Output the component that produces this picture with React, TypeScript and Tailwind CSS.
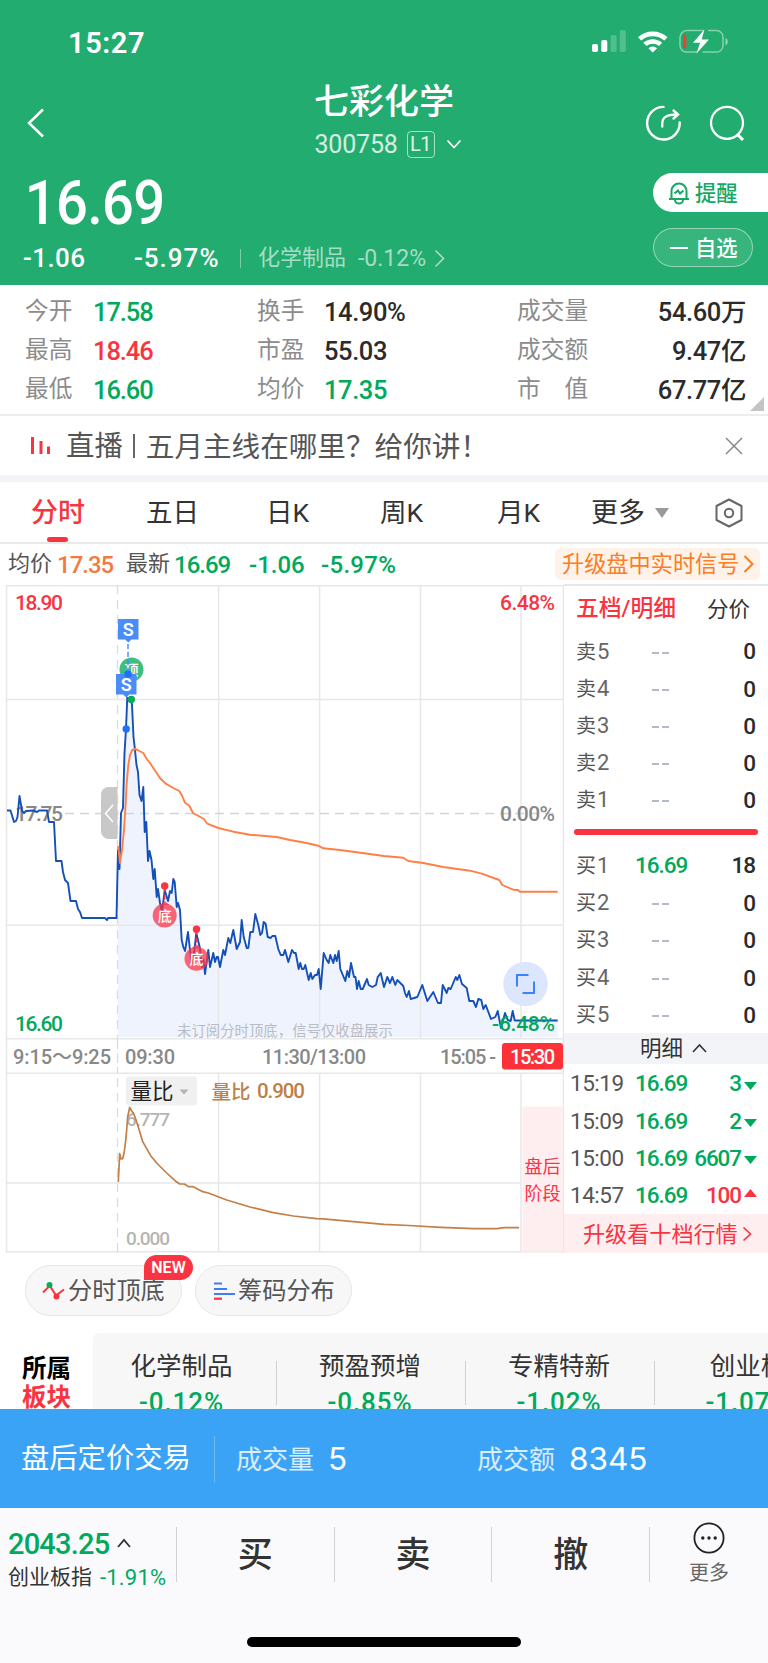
import React from "react";

const OPENING_LINE =
	"7,810.5 10.5,810.5 14,822 16,821 17.5,817 19.5,796 22,811 24,813 26,811 33,810.5 37,812 39,810.5 47,810.5 49,822 54,822 56,861 61.5,861 63,872 65,880 68,883 70.5,901 76,901 78,909 80,912 82,918 105,918 107,920 108,918 116.5,918";

const RISE_LINE = "118,850 118.5,862 119.5,869 121,813 123,808 124.5,753 126,729 127.3,697";

const DAY_LINE =
	"131,697 132,705 133.5,737 135,750 136.5,765 138,772 139.5,795 141.5,801 143.3,787 144.7,832 146.3,822 148,861 149.5,851 151.5,860 153.3,879 154.7,869 156.7,897 158,889 160,903 162,912 164.7,890 168,901 170,891 171.7,893 173.3,879 174.7,882 176.7,907 178,903 180,910 181.7,940 183.3,947 185,951 188,932 190,950 191.7,963 194,953 196.3,933 199.7,947 202,967 203.5,960 205,974 208.3,950 210,967 213.3,953 215,962 216.7,957 218,957 220,967 223.3,950 225,955 228.3,938 230.3,943 233.3,930 236.7,949 240,942 241.7,920 243.7,937 246.7,948 248.3,948 250.3,932 253,932 255.3,914 258.3,925 260.3,935 262,933 263.7,922 265.7,924 267.7,937 270.7,938 272.3,936 275.3,936 278.3,949 280.7,955 283.3,955 285,950 288.3,962 292,950 294,953 295.7,953 298.7,969 300.3,963 302,969 303.7,969 305.3,965 308.7,980 310.7,973 312.3,979 315,975 317,975 318.7,969 320.7,989 323.7,953 326.7,960 328.7,963 330.3,955 333.3,963 335,955 336.7,961 338.7,951 340.3,969 345.3,981 347.3,971 349,977 351,963 354,977 355.5,977 357,989 358.7,981 360.7,989 362.7,989 367,979 368.7,985 372.3,987 376,985 377.7,977 380.7,973 384,987 387.3,977 390,983 392.3,977 395.3,985 397.3,980 403.3,986 405,993 406.7,997 409,991 410.7,999 414,998 417.3,997 422.3,985 427.3,1001 433.3,992 438,1003 441,1003 442.7,985 446.7,993 448.3,988 450.7,989 455.7,977 457.3,980 459.3,975 462,984 466.7,988 469.3,1001 473.3,1001 476,1007 478.3,999 481.3,1000 483.3,1009 485.7,1005 491,1019 495.3,1017 497.7,1011 501,1028 505,1013 507.7,1020 510.7,1021 512.7,1011 514.7,1020.5 557.7,1020.5";

const AVERAGE_LINE =
	"118.3,846 120,863 122,850 124,830 125.7,803 126.7,783 128.3,765 130,755 132.3,750 135,749 137.5,750 143.3,753 146.7,759 150,763 153.3,768 160,778 165.7,783.7 173.3,788 179.3,791 181.7,795 185,802.7 189.3,805.7 193,813 196.7,815 204,819 207.3,823.7 218.3,828 233.3,831.7 250,834.7 276.7,837 290,840 306.7,843 318.3,845.7 323.3,848.3 340,850 356.7,852.3 384,856 403.3,857.7 408.3,861 423.3,863 443.3,867 470,870.7 481.7,873.7 499.3,880 502.3,885 513.3,889.7 518,890 520,891.7 557.7,891.7";

const RATIO_LINE =
	"118.3,1182 119.7,1153.7 121,1159 122.7,1158.7 124.3,1151.7 126,1138 127.7,1116.7 129.7,1107.3 131.7,1111 133.3,1113 135,1117 138.3,1127 142.7,1141.7 150.7,1155.7 156.7,1163 166.7,1173 175,1180.7 179.7,1184 184.3,1184 188.7,1186.7 193.3,1186.7 202.7,1191.7 208.3,1193 226.7,1200 250,1207 273.3,1212.7 293.3,1216 316.7,1218.7 323,1218.9 353.3,1221.7 384,1224.3 409,1225.5 440.7,1227.3 474,1228.7 497.3,1228.7 504,1227.7 519,1227.7";

const STATS = [
	["今开", "17.58", "text-[#00a95c]", "换手", "14.90%", "text-[#2b2b2b]", "成交量", "54.60万"],
	["最高", "18.46", "text-[#f93440]", "市盈", "55.03", "text-[#2b2b2b]", "成交额", "9.47亿"],
	["最低", "16.60", "text-[#00a95c]", "均价", "17.35", "text-[#00a95c]", "市　值", "67.77亿"],
];

const SELLS = ["5", "4", "3", "2", "1"];
const BUYS = [
	["1", "16.69", "18"],
	["2", "", "0"],
	["3", "", "0"],
	["4", "", "0"],
	["5", "", "0"],
];

const TRADES = [
	["15:19", "3", "down"],
	["15:09", "2", "down"],
	["15:00", "6607", "down"],
	["14:57", "100", "up"],
];

const SECTORS = [
	["化学制品", "-0.12%"],
	["预盈预增", "-0.85%"],
	["专精特新", "-1.02%"],
	["创业板", "-1.07%"],
];

type ChevronProps = { w: number; h: number; d: string; sw?: number; className?: string };

const Chevron: React.FC<ChevronProps> = ({ w, h, d, sw = 2, className }) => (
	<svg width={w} height={h} viewBox={`0 0 ${w} ${h}`} fill="none" stroke="currentColor" strokeWidth={sw} className={`shrink-0 ${className ?? ""}`}>
		<path d={d} />
	</svg>
);

const StatusBar: React.FC = () => (
	<div className="flex h-[84px] items-center justify-between pl-[68px] pr-[38px]">
		<span className="pt-[2px] text-[29px] font-semibold leading-none tracking-[0.6px]">15:27</span>
		<svg width="138" height="26" viewBox="0 0 138 26" fill="none">
			<rect x="0" y="15" width="6" height="8" rx="1.8" fill="#fff" />
			<rect x="9.3" y="11" width="6" height="12" rx="1.8" fill="#fff" />
			<rect x="18.6" y="6" width="6" height="17" rx="1.8" fill="#fff" opacity=".22" />
			<rect x="27.8" y="1" width="6" height="22" rx="1.8" fill="#fff" opacity=".22" />
			<path d="M46 8.2a22 22 0 0 1 29.5 0l-3.2 3.4a17.4 17.4 0 0 0-23.1 0zM51.3 13.8a14.4 14.4 0 0 1 18.9 0l-3.2 3.3a9.8 9.8 0 0 0-12.5 0zM56.4 19.2a6.6 6.6 0 0 1 8.7 0l-4.4 4.3z" fill="#fff" />
			<path d="M112 1.6H94.5a7 7 0 0 0-6.5 6.5v8.5a6.5 6.5 0 0 0 6.5 6.5H106M116 1.6h8.5a6.5 6.5 0 0 1 6.5 6.5v8.5a6.5 6.5 0 0 1-6.5 6.5H110.5" stroke="#fff" strokeOpacity=".45" strokeWidth="1.5" />
			<path d="M133.5 9c3 1.5 3 6 0 7.5z" fill="#fff" opacity=".5" />
			<rect x="91" y="5.5" width="3.3" height="14" rx="1.5" fill="#fb3b2f" />
			<path d="M112.5 0.5 101 13.7h7l-3.5 10.8L117 10.6h-7.4z" fill="#fff" />
		</svg>
	</div>
);

const Header: React.FC = () => (
	<header className="h-[285px] bg-[#22ac6f] text-white">
		<StatusBar />
		<div className="flex h-[84px] items-start justify-between pl-[27px] pr-[22px]">
			<Chevron w={18} h={30} d="M16 1.5 2 15l14 13.5" sw={2.5} className="mt-6" />
			<div className="ml-[80px] flex flex-col items-center">
				<h1 className="mt-[2px] text-[35px] font-medium leading-[33px]">七彩化学</h1>
				<div className="mt-[11px] flex h-[28px] w-[145px] items-center pl-[3px]">
					<span className="w-[92px] shrink-0 text-[25px] leading-none tracking-[-0.2px] text-white/80">300758</span>
					<span className="flex h-[27px] w-[28px] shrink-0 items-center justify-center rounded border border-white/60 text-xl leading-none tracking-[-0.5px] text-white/85">L1</span>
					<Chevron w={16} h={11} d="M1.5 1.5 8 8.5l6.5-7" sw={1.8} className="ml-[11px]" />
				</div>
			</div>
			<div className="mt-5 flex gap-[25px]">
				<svg width="40" height="40" viewBox="0 0 40 40" fill="none" stroke="#fff" strokeWidth="2.4" strokeLinecap="round">
					<path d="M20.5 2.9A16.3 16.3 0 1 0 36.7 18.5" />
					<path d="M19.2 22.5v-2.5c0-6.5 4-9.5 14-9.5M30.5 6.5l4.5 4-4.5 4" />
				</svg>
				<svg width="38" height="40" viewBox="0 0 38 40" fill="none" stroke="#fff" strokeWidth="2.3">
					<circle cx="19" cy="18.8" r="16" />
					<path d="m29 30 6 6" strokeWidth="3" />
				</svg>
			</div>
		</div>
		<div className="flex justify-between">
			<div>
				<div className="flex h-[70px] origin-left scale-x-[0.92] items-center pl-[27px] pt-px text-[61px] font-medium leading-none tracking-[-0.8px]">16.69</div>
				<div className="flex h-[38px] items-center pl-[23px] pt-[2px] text-[26px] leading-none">
					<span className="w-[111px] font-medium tracking-[0.4px]">-1.06</span>
					<span className="w-[106px] font-medium tracking-[1px]">-5.97%</span>
					<span className="mr-[17px] h-[19px] w-px bg-white/40" />
					<span className="w-[100px] text-[22px] text-white/60">化学制品</span>
					<span className="w-[76px] text-[23px] text-white/60">-0.12%</span>
					<Chevron w={11} h={19} d="M1.5 1.5l8 8-8 8" sw={1.6} className="text-white/60" />
				</div>
			</div>
			<div className="flex w-[115px] flex-col pt-[5px] text-[21.3px] font-medium leading-none">
				<div className="flex h-[39px] items-center rounded-l-full bg-white pl-[15px] text-[#13a863]">
					<svg width="22" height="24" viewBox="0 0 22 24" fill="none" stroke="currentColor" strokeWidth="2">
						<path d="M1 18h20M3.5 18V10a7.5 7.5 0 0 1 15 0v8M7 19a4 3.5 0 0 0 8 0" />
						<path d="M6.5 12.5 10 9.5l2 3 3.5-3" />
					</svg>
					<span className="ml-[5px] pt-[2px]">提醒</span>
				</div>
				<div className="mt-4 flex h-[39px] w-[100px] items-center rounded-full border border-white/45 bg-white/10 pl-4">
					<span className="h-[2px] w-[18px] bg-white" />
					<span className="ml-[7px] pt-[2px]">自选</span>
				</div>
			</div>
		</div>
	</header>
);

const Stats: React.FC = () => (
	<section className="relative h-[131px] border-b-2 border-[#ededed] pt-[7px]">
		{STATS.map(([a, av, ac, b, bv, bc, c, cv]) => (
			<div key={a} className="flex h-[39px] items-center pl-[25px] pr-[22px] text-[25.5px] font-medium leading-none tracking-[-0.8px]">
				<span className="w-[68px] text-[23.7px] font-normal tracking-normal text-[#8c8c8c]">{a}</span>
				<span className={`w-[164px] pt-[2px] tracking-[-1.1px] ${ac}`}>{av}</span>
				<span className="w-[67px] text-[23.7px] font-normal tracking-normal text-[#8c8c8c]">{b}</span>
				<span className={`w-[193px] pt-[2px] tracking-[-0.4px] ${bc}`}>{bv}</span>
				<span className="text-[23.7px] font-normal tracking-normal text-[#8c8c8c]">{c}</span>
				<span className="ml-auto pt-[2px] tracking-[-0.4px] text-[#2b2b2b]">{cv}</span>
			</div>
		))}
		<svg className="absolute right-1 top-[112px]" width="14" height="14" viewBox="0 0 14 14">
			<path d="M14 0v14H0z" fill="#c4c4c4" />
		</svg>
	</section>
);

const LiveBanner: React.FC = () => (
	<section className="flex h-[66px] items-center border-b-[7px] border-[#f3f4f8] pl-[31px] pr-[25px]">
		<svg width="20" height="19" viewBox="0 0 20 19" stroke="#f93440" strokeWidth="3">
			<path d="M1.5 1v17M10 5v13M17.5 10.5V18" />
		</svg>
		<span className="ml-[15px] pt-[3px] text-[28.4px] leading-none text-[#555]">直播</span>
		<span className="ml-[10px] mr-[11px] h-[24px] w-[2px] bg-[#666]" />
		<span className="pt-[3px] text-[28.6px] leading-none text-[#555]">五月主线在哪里？给你讲！</span>
		<Chevron w={18} h={18} d="M1 1l16 16M17 1 1 17" sw={1.5} className="ml-auto text-[#888]" />
	</section>
);

const Tabs: React.FC = () => (
	<nav className="relative flex h-[62px] items-center border-b-2 border-[#e9e9e9] pl-[31px] pt-[2px] text-[27px] leading-none text-[#333]">
		<span className="w-[115px] font-medium text-[#f93440]">分时</span>
		<span className="w-[120px] text-[26.5px]">五日</span>
		<span className="w-[114px] text-[26.5px]">日K</span>
		<span className="w-[117px] text-[26.5px]">周K</span>
		<span className="w-[94px] text-[26.5px]">月K</span>
		<span>更多</span>
		<svg className="ml-[10px]" width="14" height="11" viewBox="0 0 14 11">
			<path d="M0 0h14L7 10z" fill="#999" />
		</svg>
		<svg className="ml-[46px]" width="28" height="30" viewBox="0 0 28 30" fill="none" stroke="#666" strokeWidth="2">
			<path d="M14 1.5 26.5 8v14L14 28.5 1.5 22V8z" strokeLinejoin="round" />
			<circle cx="14" cy="15" r="4.2" />
		</svg>
		<span className="absolute bottom-0 left-[47px] h-[5px] w-[21px] rounded-full bg-[#f93440]" />
	</nav>
);

const InfoRow: React.FC = () => (
	<div className="flex h-[40px] items-center pl-2 pr-2 text-[24px] font-medium leading-none tracking-[-1px] text-[#00a95c]">
		<span className="w-[49px] text-[22px] font-normal tracking-normal text-[#555]">均价</span>
		<span className="w-[69px] pt-[2px] text-[#f37b3f]">17.35</span>
		<span className="w-[48px] text-[22px] font-normal tracking-normal text-[#555]">最新</span>
		<span className="w-[75px] pt-[2px]">16.69</span>
		<span className="w-[72px] pt-[2px] tracking-normal">-1.06</span>
		<span className="pt-[2px] tracking-[0.3px]">-5.97%</span>
		<span className="ml-auto flex h-8 w-[205px] items-center rounded-md bg-[#fff2e8] pl-[7px] text-[22.2px] font-normal tracking-normal text-[#fb7d24]">
			升级盘中实时信号
			<Chevron w={11} h={20} d="M1.5 2l8 8-8 8" className="ml-[3px]" />
		</span>
	</div>
);

type MarkProps = { x: number; y: number; label: string; color: string };

const Flag: React.FC<{ x: number; y: number }> = ({ x, y }) => (
	<g>
		<path d={`M${x} ${y}h20.5v20.5h-7l-3.2 3-3.2-3h-7.1z`} fill="#4a8cfb" />
		<text x={x + 10.2} y={y + 16.8} textAnchor="middle" fontSize="18" fontWeight="600" fill="#fff">S</text>
	</g>
);

const BottomMark: React.FC<MarkProps> = ({ x, y, label, color }) => (
	<g>
		<path d={`M${x} ${y - 29}v14`} stroke={color} strokeWidth="1.5" strokeDasharray="5 3" />
		<circle cx={x} cy={y - 29.5} r="3.7" fill={color} />
		<path d={`M${x - 5} ${y - 10.5}l5-4 5 4z`} fill={color} opacity=".75" />
		<circle cx={x} cy={y} r="12" fill={color} opacity=".75" />
		<text x={x} y={y + 5.2} textAnchor="middle" fontSize="14" fontWeight="500" fill="#fff">{label}</text>
	</g>
);

const Chart: React.FC = () => (
	<svg width="564" height="669" viewBox="0 584 564 669" fill="none" className="shrink-0 font-[Roboto,'Noto_Sans_CJK_SC',sans-serif]">
		<path d={`M118,1037 L${RISE_LINE} ${DAY_LINE} L557.7,1037 z`} fill="#eff3fe" />
		<g stroke="#e7e7e7" strokeWidth="1.5">
			<path d="M6 585.7h558M6 699.5h558M6 925.3h558M6 1038.8h558M6 1073.3h558M6 1183h515M6 1251.8h558" />
			<path d="M6.5 585v667M218.6 585v454M319.6 585v454M420.5 585v454M521 585v454M563.5 585v667" />
			<path d="M218.6 1073v179M319.6 1073v179M420.5 1073v179M521 1073v179" />
		</g>
		<path d="M117.5 585v454M117.5 1078v174" stroke="#dcdcdc" strokeWidth="1.3" strokeDasharray="9 6" />
		<path d="M117.5 1039v34" stroke="#dcdcdc" strokeWidth="1.3" strokeDasharray="10 4" />
		<path d="M65 813.5h495" stroke="#c9d8e2" strokeWidth="1.3" strokeDasharray="9 6" />

		<path d="M117.5 787h-9a7.5 7.5 0 0 0-7.5 7.5v37a7.5 7.5 0 0 0 7.5 7.5h9z" fill="#c8c8c8" />
		<path d="M113 805l-7.5 8.5 7.5 8.5" stroke="#fff" strokeWidth="1.5" />

		<g fontSize="21" fontWeight="500">
			<text x="15" y="609.5" fill="#f93440" textLength="48">18.90</text>
			<text x="555" y="609.5" fill="#f93440" textAnchor="end" textLength="55">6.48%</text>
			<text x="15" y="820.5" fill="#888" textLength="48">17.75</text>
			<text x="555" y="820.5" fill="#888" textAnchor="end" textLength="55">0.00%</text>
			<text x="15" y="1030.5" fill="#00a95c" textLength="48">16.60</text>
		</g>
		<text x="177" y="1035.5" fontSize="14.4" fill="#b9bcc4">未订阅分时顶底，信号仅收盘展示</text>

		<circle cx="131.5" cy="669.5" r="12" fill="#42bd82" />
		<text x="131.5" y="675" textAnchor="middle" fontSize="14" fontWeight="500" fill="#fff">顶</text>
		<path d="M128 644v28" stroke="#4a8cfb" strokeWidth="1.5" strokeDasharray="5 3" />
		<Flag x={118} y={619} />
		<Flag x={116} y={674} />
		<g stroke="#1450b8" strokeWidth="1.9" strokeLinejoin="round">
			<polyline points={`${OPENING_LINE} ${RISE_LINE}`} />
			<polyline points={DAY_LINE} />
		</g>
		<polyline points={AVERAGE_LINE} stroke="#ff7f45" strokeWidth="1.9" strokeLinejoin="round" />
		<circle cx="128" cy="674" r="3.7" fill="#2171f5" />
		<circle cx="131.3" cy="699.5" r="3.7" fill="#00a95c" />
		<circle cx="126.2" cy="729" r="3.7" fill="#2171f5" />
		<BottomMark x={164.7} y={915.5} label="底" color="#f93448" />
		<BottomMark x={196.5} y={958.7} label="底" color="#f93448" />

		<circle cx="525.5" cy="984" r="22.3" fill="#dce7fd" />
		<path d="M517 986.5V975h11.5M534 981.5V993h-11.5" stroke="#3c82f8" strokeWidth="2" />
		<text x="555" y="1030.5" fontSize="21" fontWeight="500" fill="#00a95c" textAnchor="end" textLength="63">-6.48%</text>

		<g fontSize="20" fontWeight="500" fill="#888">
			<text x="13" y="1064" textLength="98">9:15～9:25</text>
			<text x="125" y="1064" textLength="50">09:30</text>
			<text x="262" y="1064" textLength="104">11:30/13:00</text>
			<text x="440" y="1064" textLength="56">15:05 -</text>
		</g>
		<rect x="502" y="1043" width="61" height="26.5" rx="3" fill="#fd3138" />
		<text x="532.5" y="1064" fontSize="20" fontWeight="500" fill="#fff" textAnchor="middle" textLength="45">15:30</text>

		<rect x="522.5" y="1106.5" width="40.5" height="145" fill="#ffeef0" />
		<text x="524.5" y="1173" fontSize="18" fill="#f93448">盘后</text>
		<text x="524.5" y="1199.5" fontSize="18" fill="#f93448">阶段</text>
		<rect x="126" y="1076.5" width="71" height="29" rx="3" fill="#f0f0f0" />
		<text x="130.5" y="1098.5" fontSize="21.5" fill="#222">量比</text>
		<path d="M179.5 1089.5h9l-4.5 5z" fill="#b5b5b5" />
		<text x="211.5" y="1098.5" fontSize="19.5" fill="#be8046" fontWeight="500">量比</text>
		<text x="257" y="1098" fontSize="20.5" fill="#be8046" fontWeight="500" textLength="48">0.900</text>
		<text x="126" y="1126" fontSize="19" fontWeight="500" fill="#b5b5b5" textLength="44">6.777</text>
		<text x="126" y="1245" fontSize="19" fontWeight="500" fill="#b5b5b5" textLength="44">0.000</text>
		<polyline points={RATIO_LINE} stroke="#c27f48" strokeWidth="1.7" strokeLinejoin="round" />
	</svg>
);

type QuoteProps = { side: string; level: string; price?: string; volume: string };

const QuoteRow: React.FC<QuoteProps> = ({ side, level, price, volume }) => (
	<div className="flex h-[37.4px] items-center pl-[12px] pr-[13px] leading-none">
		<span className="w-[21px] text-[20px] text-[#555]">{side}</span>
		<span className="w-[12px] text-[22px] text-[#666]">{level}</span>
		{price ? (
			<span className="ml-[26px] text-[22.5px] font-medium tracking-[-1px] text-[#00a95c]">{price}</span>
		) : (
			<span className="ml-[43px] flex gap-[3px] pt-[2px]">
				<i className="h-[2px] w-[7px] bg-[#b3bcc6]" />
				<i className="h-[2px] w-[7px] bg-[#b3bcc6]" />
			</span>
		)}
		<span className="ml-auto text-[22.5px] font-medium tracking-[-1px] text-[#2b2b2b]">{volume}</span>
	</div>
);

const OrderBook: React.FC = () => (
	<aside className="flex h-[669px] w-[204px] flex-col border-t-2 border-[#e7e7e7]">
		<div className="flex h-[47px] shrink-0 items-center justify-between pl-[12px] pr-[18px] leading-none">
			<span className="text-[22.8px] font-medium text-[#f93440]">五档/明细</span>
			<span className="text-[21.5px] text-[#333]">分价</span>
		</div>
		{SELLS.map((n) => <QuoteRow key={n} side="卖" level={n} volume="0" />)}
		<div className="ml-[10px] mr-[10px] mt-[10px] h-[6px] shrink-0 rounded-full bg-[#f93440]" />
		<div className="mt-[12px]">
			{BUYS.map(([n, p, v]) => <QuoteRow key={n} side="买" level={n} price={p} volume={v} />)}
		</div>
		<div className="-mt-px flex h-[31px] shrink-0 items-center justify-center gap-[9px] bg-[#f3f4f8] pl-[15px] text-[21.5px] leading-none text-[#333]">
			明细
			<Chevron w={15} h={10} d="M1 9l6.5-7L14 9" sw={1.6} />
		</div>
		<div className="mt-px">
			{TRADES.map(([time, vol, dir]) => (
				<div key={time} className="flex h-[37.3px] items-center pl-[6px] pr-[11px] text-[22.5px] leading-none">
					<span className="w-[65px] tracking-[-0.5px] text-[#555]">{time}</span>
					<span className="font-medium tracking-[-1px] text-[#00a95c]">16.69</span>
					<span className={`ml-auto font-medium tracking-[-1.1px] ${dir === "up" ? "text-[#f93440]" : "text-[#00a95c]"}`}>{vol}</span>
					<svg className={`ml-[3px] ${dir === "up" ? "-mt-[5px] rotate-180 text-[#f93440]" : "mt-[4px] text-[#00a95c]"}`} width="13" height="8" viewBox="0 0 13 8">
						<path d="M0 0h13L6.5 8z" fill="currentColor" />
					</svg>
				</div>
			))}
		</div>
		<div className="mt-auto flex h-[39px] items-center bg-[#ffeef0] pl-[19px] text-[22.1px] leading-none text-[#f93440]">
			升级看十档行情
			<Chevron w={10} h={16} d="M1.5 1.5l7 6.5-7 6.5" sw={1.7} className="ml-1" />
		</div>
	</aside>
);

const ToolPills: React.FC = () => (
	<section className="flex h-[80px] gap-[13px] pl-[25px] pt-3 text-[24.2px] leading-none text-[#555]">
		<div className="relative flex h-[51px] w-[157px] items-center rounded-full border border-[#e6e6e6] bg-[#f7f7f7] pl-[16px]">
			<svg width="23" height="20" viewBox="0 0 23 20" fill="none" strokeWidth="2" stroke="#f93440">
				<path d="M1 11.5 6.5 6M8 5l6 9.5L22 8.5" />
				<circle cx="7.5" cy="4" r="3" fill="#0aaa5f" stroke="none" />
				<circle cx="14.5" cy="15.5" r="3" fill="#f93440" stroke="none" />
			</svg>
			<span className="ml-[3px] pt-[2px]">分时顶底</span>
			<span className="absolute -top-[11px] left-[118px] flex h-[25px] w-[49px] items-center justify-center rounded-full rounded-bl-none bg-[#fa3442] pt-px text-[16px] font-semibold text-white">NEW</span>
		</div>
		<div className="flex h-[51px] w-[157px] items-center rounded-full border border-[#e6e6e6] bg-[#f7f7f7] pl-[18px]">
			<svg width="21" height="18" viewBox="0 0 21 18" strokeWidth="2.2" stroke="#3c7ef5">
				<path d="M0 1.5h8M0 7h13M0 12h21" />
				<path d="M0 16.7h8" stroke="#f93440" />
			</svg>
			<span className="ml-[3px] pt-[2px]">筹码分布</span>
		</div>
	</section>
);

const Sectors: React.FC = () => (
	<section className="flex h-[76px] overflow-hidden">
		<div className="w-[93px] shrink-0 pl-[22px] pt-[21px] text-[24.5px] font-bold leading-[29px]">
			<div className="text-black">所属</div>
			<div className="text-[#f93440]">板块</div>
		</div>
		<div className="flex flex-1 overflow-hidden rounded-tl-md bg-[#f7f7f7]">
			{SECTORS.map(([name, change], i) => (
				<div key={name} className={`relative flex shrink-0 flex-col items-center ${i ? "w-[189px] pr-[3px]" : "w-[184px] pr-[7px]"}`}>
					<span className="mt-5 text-[25.5px] leading-[26px] text-[#333]">{name}</span>
					<span className="mt-[7px] text-[26px] font-medium leading-[32px] tracking-[0.9px] text-[#00a95c]">{change}</span>
					<span className="absolute right-0 top-7 h-[44px] w-px bg-[#cfcfcf]" />
				</div>
			))}
		</div>
	</section>
);

const AfterHours: React.FC = () => (
	<section className="flex h-[99px] items-center bg-[#3ba3f6] pl-[21px] leading-none text-white">
		<span className="w-[193px] pt-[2px] text-[28.3px]">盘后定价交易</span>
		<span className="mr-[21px] h-[46px] w-px bg-white/25" />
		<span className="w-[92px] pt-[2px] text-[26px] text-white/80">成交量</span>
		<span className="w-[149px] pt-px font-[Inter] text-[31.5px]">5</span>
		<span className="w-[92px] pt-[2px] text-[26px] text-white/80">成交额</span>
		<span className="pt-px font-[Inter] text-[31.5px]">8345</span>
	</section>
);

const BottomBar: React.FC = () => (
	<footer className="flex h-[155px] flex-col items-center justify-between bg-[#fafafc] pb-4">
		<div className="flex h-[92px] w-full items-center leading-none">
			<div className="h-[79px] w-[176px] pl-2 pt-[13px]">
				<div className="flex h-[34px] items-center text-[29px] font-medium tracking-[-0.8px] text-[#00a95c]">
					2043.25
					<Chevron w={14} h={10} d="M1 9l6-7 6 7" sw={1.8} className="mb-1 ml-2 text-[#333]" />
				</div>
				<div className="mt-[3px] flex h-[26px] items-center text-[21px] text-[#333]">
					创业板指
					<span className="ml-[8px] text-[22px] tracking-[0.2px] text-[#00a95c]">-1.91%</span>
				</div>
			</div>
			{["买", "卖", "撤"].map((t) => (
				<div key={t} className="flex h-[55px] w-[157.7px] items-center justify-center border-l border-[#d2d2d4] pt-[2px] text-[35px] font-medium text-[#333]">{t}</div>
			))}
			<div className="flex h-[55px] flex-1 flex-col items-center justify-center border-l border-[#d2d2d4] pb-1 text-[20px] text-[#666]">
				<svg className="shrink-0" width="32" height="32" viewBox="0 0 32 32" fill="none" stroke="#222" strokeWidth="1.8">
					<circle cx="16" cy="16" r="14.6" />
					<g fill="#222" stroke="none">
						<circle cx="9.8" cy="16" r="1.7" />
						<circle cx="16" cy="16" r="1.7" />
						<circle cx="22.2" cy="16" r="1.7" />
					</g>
				</svg>
				<span className="mt-[9px]">更多</span>
			</div>
		</div>
		<div className="h-[10px] w-[274px] rounded-full bg-black" />
	</footer>
);

const App: React.FC = () => {
	return (
		<div className="h-[1663px] w-[768px] overflow-hidden whitespace-nowrap bg-white font-[Roboto,'Noto_Sans_CJK_SC',sans-serif]">
			<Header />
			<Stats />
			<LiveBanner />
			<Tabs />
			<InfoRow />
			<main className="flex h-[669px]">
				<Chart />
				<OrderBook />
			</main>
			<ToolPills />
			<Sectors />
			<AfterHours />
			<BottomBar />
		</div>
	);
};

export default App;
